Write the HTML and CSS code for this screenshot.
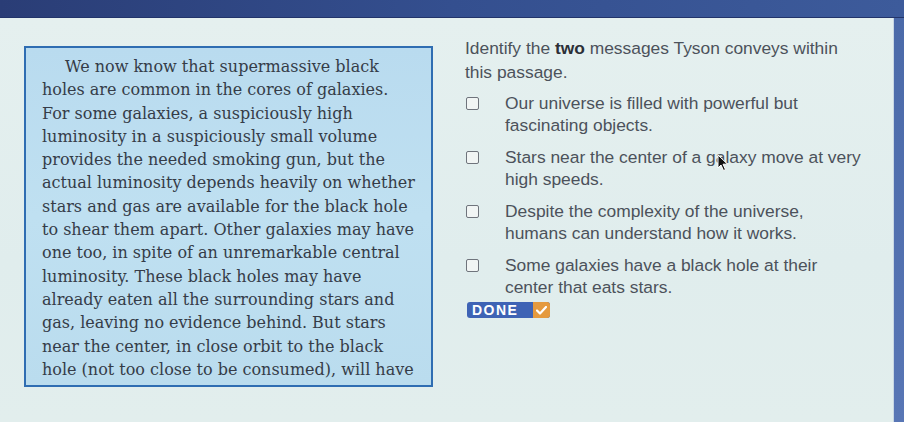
FILE: index.html
```html
<!DOCTYPE html>
<html lang="en">
<head>
<meta charset="utf-8">
<title>Tyson passage</title>
<link rel="stylesheet" href="styles.css">
</head>
<body>
<div class="topbar"></div>
<div class="screen">
  <main class="panel">
    <section class="passage-col">
      <div class="passage">
        <p>We now know that supermassive black holes are common in the cores of galaxies. For some galaxies, a suspiciously high luminosity in a suspiciously small volume provides the needed smoking gun, but the actual luminosity depends heavily on whether stars and gas are available for the black hole to shear them apart. Other galaxies may have one too, in spite of an unremarkable central luminosity. These black holes may have already eaten all the surrounding stars and gas, leaving no evidence behind. But stars near the center, in close orbit to the black hole (not too close to be consumed), will have</p>
      </div>
    </section>
    <section class="question-col">
      <p class="question">Identify the <b>two</b> messages Tyson conveys within this passage.</p>
      <ul class="options">
        <li class="option"><span class="box"></span><span class="opt-text">Our universe is filled with powerful but fascinating objects.</span></li>
        <li class="option"><span class="box"></span><span class="opt-text">Stars near the center of a galaxy move at very high speeds.</span></li>
        <li class="option"><span class="box"></span><span class="opt-text">Despite the complexity of the universe, humans can understand how it works.</span></li>
        <li class="option"><span class="box"></span><span class="opt-text">Some galaxies have a black hole at their center that eats stars.</span></li>
      </ul>
      <button class="done"><span class="done-label">DONE</span><span class="done-check"><svg width="11" height="9" viewBox="0 0 11 9"><path d="M1 4.5 L4 7.5 L10 1" fill="none" stroke="#fff" stroke-width="2.2" stroke-linecap="round" stroke-linejoin="round"/></svg></span></button>
      <svg class="cursor" width="12" height="18" viewBox="0 0 12 18"><path d="M1 1 L1 14 L4 11 L6.5 16.5 L8.5 15.6 L6 10.2 L10.5 10.2 Z" fill="#111" stroke="#fff" stroke-width="1"/></svg>
    </section>
  </main>
  <div class="edge"></div>
</div>
</body>
</html>
```
FILE: styles.css
```css
* { box-sizing: border-box; }
html, body { margin: 0; padding: 0; }
body {
  width: 904px;
  height: 422px;
  overflow: hidden;
  background: #5171b0;
  font-family: "Liberation Sans", Arial, sans-serif;
}
.topbar {
  height: 18px;
  background: linear-gradient(90deg, #2a3d76 0%, #344f8f 50%, #3d5b9b 100%);
  border-bottom: 1px solid #22346a;
}
.screen {
  display: flex;
  height: 404px;
}
.panel {
  width: 893px;
  height: 404px;
  display: flex;
  background: linear-gradient(180deg, #e5f0ef 0%, #e0eded 60%, #e2eeed 100%);
}
.edge {
  flex: 1;
  background: linear-gradient(180deg, #4b6aa9, #5876b5);
  border-left: 1px solid #c7d6e4;
}
.passage-col {
  padding: 28px 0 0 24px;
}
.passage {
  width: 409px;
  border: 2px solid #2f6db2;
  background: linear-gradient(180deg, #b9dbef 0%, #bfe0f1 50%, #badcee 100%);
  padding: 7px 14px 4px 16px;
}
.passage p {
  margin: 0;
  font-family: "DejaVu Serif", Georgia, serif;
  font-size: 16px;
  line-height: 23.3px;
  color: #353c48;
  text-indent: 23px;
}
.question-col {
  position: relative;
  margin-left: 32px;
  padding-top: 18px;
}
.question {
  margin: 0;
  width: 400px;
  font-size: 17.4px;
  line-height: 24px;
  color: #4c525b;
}
.question b {
  color: #2b2f37;
}
.options {
  list-style: none;
  margin: 8px 0 0;
  padding: 0;
  display: flex;
  flex-direction: column;
  gap: 10px;
}
.option {
  display: flex;
  align-items: flex-start;
}
.box {
  width: 13px;
  height: 13px;
  margin-top: 5px;
  margin-left: 1px;
  border: 1.5px solid #6f747c;
  border-radius: 2px;
  background: #f1f5f4;
  flex: none;
}
.opt-text {
  margin-left: 26px;
  width: 360px;
  font-size: 17.4px;
  line-height: 22px;
  color: #4c525b;
}
.done {
  margin-top: 4px;
  display: flex;
  align-items: stretch;
  height: 16px;
  padding: 0;
  border: none;
  border-radius: 3px;
  overflow: hidden;
  background: #3e63b5;
  margin-left: 2px;
}
.done-label {
  display: flex;
  align-items: center;
  padding: 0 4px 0 5px;
  width: 66px;
  font-family: "Liberation Sans", Arial, sans-serif;
  font-weight: bold;
  font-size: 14px;
  letter-spacing: 1.5px;
  color: #ffffff;
}
.done-check {
  width: 17px;
  display: flex;
  align-items: center;
  justify-content: center;
  background: #e59a3e;
}
.cursor {
  position: absolute;
  left: 252px;
  top: 136px;
}
```
